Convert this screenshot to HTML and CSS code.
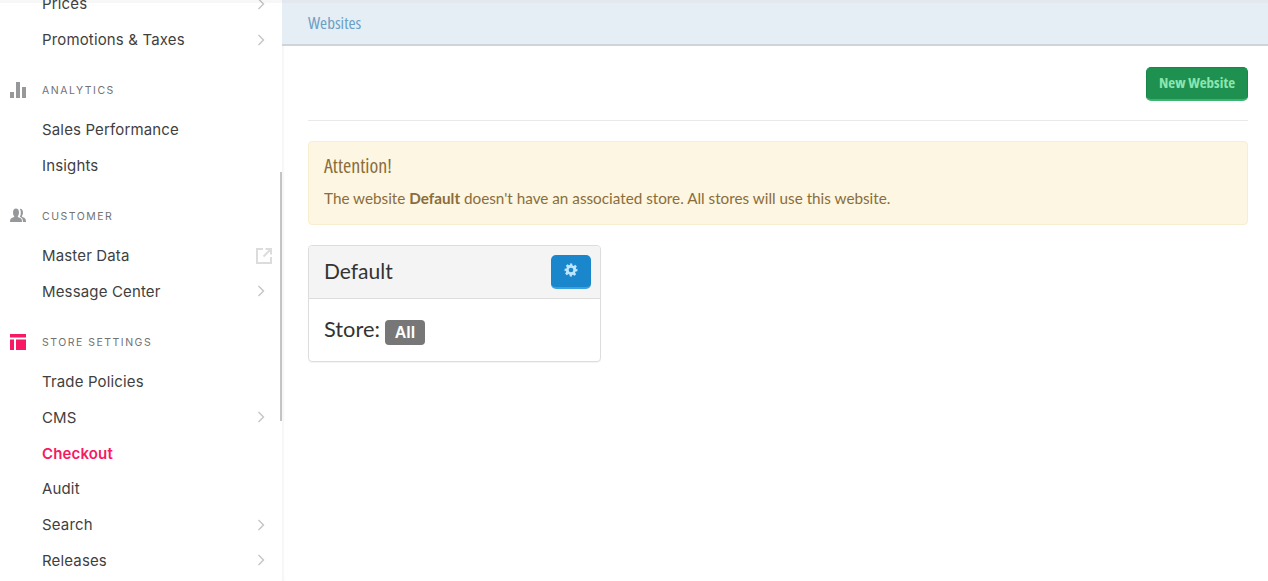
FILE: index.html
```html
<!DOCTYPE html>
<html lang="en">
<head>
<meta charset="utf-8">
<title>Websites</title>
<link rel="stylesheet" href="styles.css">
</head>
<body>
<div class="app">
  <aside class="sidebar">
    <nav class="nav">
      <a class="row">Prices<svg class="chev" viewBox="0 0 8 12"><path d="M1.5 1l5 5-5 5"/></svg></a>
      <a class="row">Promotions &amp; Taxes<svg class="chev" viewBox="0 0 8 12"><path d="M1.5 1l5 5-5 5"/></svg></a>

      <div class="section">
        <svg class="sec-icon" viewBox="0 0 16 16"><path d="M0 10h4v6H0zM6 0h4v16H6zM12 5h4v11h-4z"/></svg>
        <span>ANALYTICS</span>
      </div>
      <a class="row">Sales Performance</a>
      <a class="row">Insights</a>

      <div class="section">
        <svg class="sec-icon" viewBox="0 0 16 16"><path d="M0 14c0-3 1-4 3-4.500 1-.3 1.300-.7 1.200-1.300C3.400 7.400 3 6 3 4.500 3 2 4.200 0.500 6 .5s3 1.500 3 4c0 1.500-.4 2.900-1.200 3.700-.1.600.2 1 1.200 1.300 2 .5 3 1.500 3 4.500z"/><path d="M10.200 .8c1.700 0 2.800 1.400 2.800 3.800 0 1.400-.4 2.700-1.100 3.500-.1.500.2.900 1.100 1.200 2 .5 3 1.600 3 4.700h-3c0-2.800-1-4.400-3.200-5.200.6-1 1-2.600 1-4.100 0-1.500-.3-2.800-.9-3.700z"/></svg>
        <span>CUSTOMER</span>
      </div>
      <a class="row">Master Data<svg class="ext" viewBox="0 0 16 16"><path d="M7 1H1v14h14V9M9.500 1H15v5.500M15 1L7.500 8.500"/></svg></a>
      <a class="row">Message Center<svg class="chev" viewBox="0 0 8 12"><path d="M1.500 1l5 5-5 5"/></svg></a>

      <div class="section">
        <svg class="sec-icon active" viewBox="0 0 16 16"><path d="M0 0h16v3.500H0zM0 5.500h4V16H0zM6 5.500h10V16H6z"/></svg>
        <span>STORE SETTINGS</span>
      </div>
      <a class="row">Trade Policies</a>
      <a class="row">CMS<svg class="chev" viewBox="0 0 8 12"><path d="M1.500 1l5 5-5 5"/></svg></a>
      <a class="row current">Checkout</a>
      <a class="row">Audit</a>
      <a class="row">Search<svg class="chev" viewBox="0 0 8 12"><path d="M1.500 1l5 5-5 5"/></svg></a>
      <a class="row">Releases<svg class="chev" viewBox="0 0 8 12"><path d="M1.500 1l5 5-5 5"/></svg></a>
    </nav>
    <div class="thumb"></div>
  </aside>

  <main class="main">
    <header class="crumb">Websites</header>
    <div class="content">
      <div class="toolbar">
        <button class="btn btn-green">New Website</button>
      </div>
      <div class="alert">
        <h4 class="alert-title">Attention!</h4>
        <p class="alert-text">The website <strong>Default</strong> doesn't have an associated store. All stores will use this website.</p>
      </div>
      <section class="card">
        <div class="card-head">
          <h3 class="card-title">Default</h3>
          <button class="btn btn-blue" aria-label="Settings">
            <svg class="gear" viewBox="0 0 24 24"><path fill-rule="evenodd" d="M10 1h4l.6 3.200 1.900.8 2.700-1.800 2.800 2.800-1.800 2.700.8 1.900L23 10v4l-3.200.6-.8 1.900 1.800 2.700-2.800 2.800-2.700-1.800-1.900.8L13.900 23H10l-.6-3.200-1.900-.8-2.700 1.800-2.800-2.800 1.800-2.700-.8-1.900L1 14v-4l3.200-.6.8-1.900-1.800-2.700 2.800-2.800 2.700 1.800 1.900-.8zM12 8a4 4 0 100 8 4 4 0 000-8z"/></svg>
          </button>
        </div>
        <div class="card-body">
          <span class="store">Store:</span>
          <span class="label">All</span>
        </div>
      </section>
    </div>
  </main>
</div>
</body>
</html>
```
FILE: styles.css
```css
* { box-sizing: border-box; }
html, body { margin: 0; height: 100%; overflow: hidden; background: #fff; }
.app { display: flex; height: 581px; }

.sidebar {
  position: relative;
  flex: 0 0 282px;
  overflow: hidden;
  background: #fff;
  z-index: 1;
  font-family: Inter, "Noto Sans", sans-serif;
}
.sidebar::before {
  content: "";
  position: absolute;
  left: 0;
  right: 0;
  top: 0;
  height: 3px;
  background: rgba(0,0,0,.03);
}
.nav { margin-top: -14.15px; }
.row {
  display: flex;
  align-items: center;
  justify-content: space-between;
  height: 35.8px;
  padding: 0 16px 0 42px;
  font-size: 15px;
  letter-spacing: .15px;
  color: #3f3f40;
}
.row.current { color: #f71963; font-weight: 600; }
.chev { width: 8px; height: 12px; margin-right: 1px; fill: none; stroke: #c4c4c4; stroke-width: 1.4; }
.ext { width: 16px; height: 16px; margin-right: -6px; fill: none; stroke: #dcdcdc; stroke-width: 2; }
.section {
  display: flex;
  align-items: center;
  height: 14px;
  margin: 26px 0 14.3px;
  padding-left: 10px;
  font-size: 10.5px;
  letter-spacing: 1.5px;
  color: #727273;
}
.sec-icon { width: 16px; height: 16px; margin-right: 16px; fill: #979899; flex: none; }
.sec-icon.active { fill: #f71963; }
.thumb { position: absolute; right: 0; top: 172px; width: 2px; height: 249px; background: #c4c4c4; }

.main { flex: 1; min-width: 0; font-family: Lato, sans-serif; box-shadow: inset 3px 0 2px -1px #f6f6f6; }
.crumb {
  height: 46px;
  border-top: 3px solid #e3e8ee;
  border-bottom: 2px solid #cfd4d9;
  background: #e5eef5;
  padding: 0 26px 2px;
  display: flex;
  align-items: center;
  font-family: "Open Sans", sans-serif;
  font-stretch: 80%;
  font-size: 17px;
  font-weight: 400;
  color: #6a9fc6;
}
.content { padding: 21px 20px 0 26px; }
.toolbar {
  display: flex;
  justify-content: flex-end;
  padding-bottom: 19px;
  border-bottom: 1px solid #e9e9e9;
}
.btn { border: 0; padding: 0; cursor: pointer; }
.btn-green {
  width: 102px;
  height: 34px;
  padding-bottom: 3px;
  background: #1e9150;
  border: 1px solid #1a8548;
  border-bottom: 2px solid #3cb371;
  border-radius: 5px;
  color: #8ce6b0;
  font-family: "Open Sans", sans-serif;
  font-stretch: 75%;
  font-weight: 700;
  font-size: 15px;
}
.alert {
  margin-top: 20px;
  height: 84px;
  padding: 13px 15px;
  background: #fdf6e2;
  border: 1px solid #f9edcf;
  border-radius: 4px;
  color: #8a6d3b;
}
.alert-title {
  margin: 0 0 11px;
  font-family: "Open Sans", sans-serif;
  font-stretch: 75%;
  font-weight: 400;
  font-size: 20px;
  line-height: 22px;
}
.alert-text { margin: 0; font-size: 15.28px; line-height: 20px; }
.card {
  margin-top: 20px;
  width: 293px;
  height: 117px;
  border: 1px solid #ddd;
  border-radius: 4px;
  color: #333;
  box-shadow: 0 1px 1px rgba(0,0,0,.05);
}
.card-head {
  height: 53px;
  display: flex;
  align-items: center;
  justify-content: space-between;
  padding: 0 9px 0 15px;
  background: #f4f4f4;
  border-bottom: 1px solid #ddd;
  border-radius: 3px 3px 0 0;
}
.card-title { margin: 0 0 4px; font-weight: 400; font-size: 21px; }
.btn-blue {
  width: 40px;
  height: 34px;
  background: #1a87cc;
  border-bottom: 2px solid #3aa2e0;
  border-radius: 5px;
  display: flex;
  align-items: flex-start;
  justify-content: center;
  padding-top: 8px;
}
.gear { width: 14px; height: 14px; fill: #bfe6ff; }
.card-body {
  display: flex;
  align-items: flex-start;
  gap: 5px;
  padding: 18px 15px 0;
}
.store { font-size: 21.8px; line-height: 24px; }
.label {
  width: 40px;
  height: 25px;
  margin-top: 3px;
  background: #777;
  border-radius: 4px;
  color: #fff;
  font-family: "Liberation Sans", sans-serif;
  font-weight: 700;
  font-size: 16px;
  display: flex;
  align-items: center;
  justify-content: center;
}
```
